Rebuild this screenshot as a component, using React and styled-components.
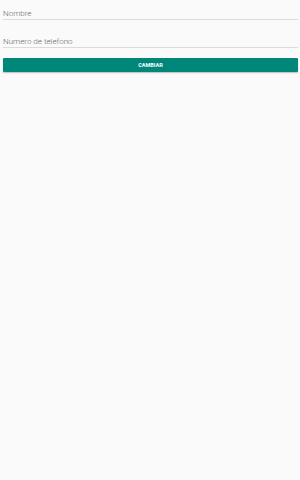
import React from 'react'
import styled, { createGlobalStyle } from 'styled-components'

const GlobalStyle = createGlobalStyle`
  html, body {
    margin: 0;
    padding: 0;
    background: #fafafa;
    height: 100%;
  }
  body {
    font-family: Roboto, 'Noto Sans', sans-serif;
  }
`

const Page = styled.div`
  display: flex;
  flex-direction: column;
  padding: 8px 2px 0 3px;
  min-height: 480px;
  box-sizing: border-box;
  background: #fafafa;
`

const Field = styled.div`
  display: flex;
  flex-direction: column;
  margin-top: ${props => props.$gap || 0}px;
  border-bottom: 1px solid #dcdcdc;
  padding-bottom: 0;
`

const Label = styled.span`
  font-size: 8px;
  line-height: 11px;
  font-weight: 300;
  color: #666666;
`

const Button = styled.button`
  margin-top: 10px;
  height: 14px;
  border: none;
  border-radius: 1px;
  background: #00877a;
  color: #ffffff;
  font-family: Roboto, 'Noto Sans', sans-serif;
  font-size: 5.5px;
  font-weight: 700;
  padding: 0;
  box-shadow: 0 1px 1.5px rgba(0, 0, 0, 0.25);
  cursor: pointer;
`

export default function App() {
  return (
    <>
      <GlobalStyle />
      <Page>
        <Field>
          <Label>Nombre</Label>
        </Field>
        <Field $gap={16}>
          <Label>Numero de telefono</Label>
        </Field>
        <Button>CAMBIAR</Button>
      </Page>
    </>
  )
}
